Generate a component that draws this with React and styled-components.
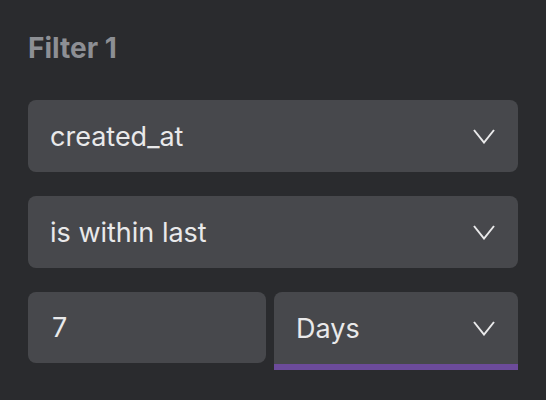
import React, { useState } from 'react';
import styled, { createGlobalStyle } from 'styled-components';

const GlobalStyle = createGlobalStyle`
  html, body {
    margin: 0;
    padding: 0;
    background: #2a2b2e;
    font-family: Inter, "Noto Sans", sans-serif;
  }
`;

const Panel = styled.div`
  width: 546px;
  height: 400px;
  box-sizing: border-box;
  padding: 31px 28px 0 28px;
  display: flex;
  flex-direction: column;
  gap: 24px;
`;

const Title = styled.h3`
  margin: 0 0 11px 0;
  font-size: 28px;
  font-weight: 700;
  color: #8d8f94;
  line-height: 34px;
`;

const SelectBox = styled.div`
  box-sizing: border-box;
  display: flex;
  align-items: center;
  justify-content: space-between;
  padding: 0 23px 0 22px;
  background: #47484c;
  border-radius: ${p => (p.$active ? '8px 8px 0 0' : '8px')};
  border-bottom: ${p => (p.$active ? '6px solid #6c4b9b' : 'none')};
  height: ${p => (p.$active ? '78px' : '72px')};
  color: #e9e9ea;
  font-size: 27px;
  cursor: pointer;
`;

const Row = styled.div`
  display: grid;
  grid-template-columns: 238px 244px;
  gap: 8px;
  align-items: start;
`;

const NumberInput = styled.input`
  height: 71px;
  box-sizing: border-box;
  border: none;
  outline: none;
  border-radius: 8px;
  background: #47484c;
  color: #e9e9ea;
  font-family: inherit;
  font-size: 27px;
  padding: 0 22px 0 24px;
  width: 100%;
`;

const Chevron = () => (
  <svg width="22" height="15" viewBox="0 0 22 15" fill="none">
    <path d="M1 1 L11 13.5 L21 1" stroke="#e9e9ea" strokeWidth="2" strokeLinejoin="miter" />
  </svg>
);

const Select = ({ value, active }) => (
  <SelectBox $active={active}>
    <span>{value}</span>
    <Chevron />
  </SelectBox>
);

export default function App() {
  const [amount, setAmount] = useState('7');

  return (
    <>
      <GlobalStyle />
      <Panel>
        <Title>Filter 1</Title>
        <Select value="created_at" />
        <Select value="is within last" />
        <Row>
          <NumberInput value={amount} onChange={e => setAmount(e.target.value)} />
          <Select value="Days" active />
        </Row>
      </Panel>
    </>
  );
}
